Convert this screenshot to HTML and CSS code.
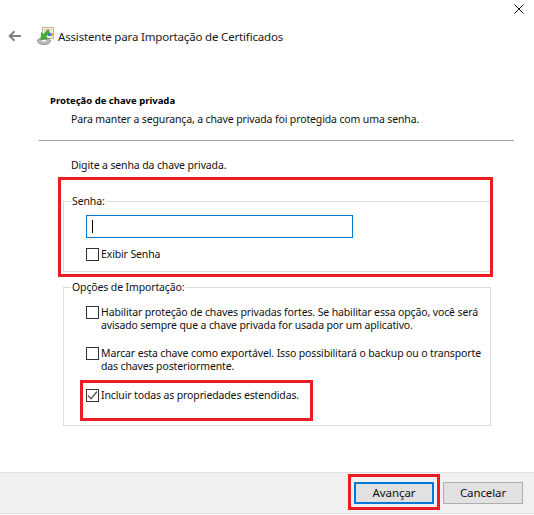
FILE: index.html
```html
<!DOCTYPE html>
<html lang="pt">
<head>
<meta charset="utf-8">
<title>Assistente para Importação de Certificados</title>
<link rel="stylesheet" href="styles.css">
</head>
<body>
<div class="window">
  <div class="closebar">
    <svg class="close" width="10" height="10" viewBox="0 0 10 10"><path d="M0.5 0.5L9.5 9.5M9.5 0.5L0.5 9.5" stroke="#111" stroke-width="1" fill="none"/></svg>
  </div>
  <div class="nav">
    <svg class="back" width="14" height="12" viewBox="0 0 14 12"><path d="M13 6H2M6.5 1.2L1.7 6L6.5 10.8" stroke="#808080" stroke-width="2" fill="none"/></svg>
    <svg class="appicon" width="17" height="18" viewBox="0 0 17 18">
      <rect x="5.5" y="0.5" width="11" height="11" fill="#f6eedb" stroke="#c9b48a"/>
      <rect x="7" y="2" width="8" height="2" fill="#e2d5b5"/>
      <rect x="11" y="6" width="3" height="3" fill="#2f7fd6"/>
      <rect x="14" y="6" width="2" height="3" fill="#f0a030"/>
      <ellipse cx="7" cy="14" rx="6.5" ry="3.5" fill="#b5bbb5" stroke="#707570" stroke-width="0.7"/>
      <ellipse cx="7" cy="13.5" rx="2.5" ry="1.2" fill="#eef0ee"/>
      <path d="M11 2.5L6.5 7.5L4.5 5.5L4 12.5L10.5 12L8.5 10L12.5 5.5Z" fill="#3fae3a" stroke="#24761f" stroke-width="0.5"/>
    </svg>
    <span class="title">Assistente para Importação de Certificados</span>
  </div>
  <main class="content">
    <div class="pagehead">
      <h1 class="heading">Proteção de chave privada</h1>
      <p class="subhead">Para manter a segurança, a chave privada foi protegida com uma senha.</p>
    </div>
    <hr class="rule">
    <p class="prompt">Digite a senha da chave privada.</p>
    <fieldset class="group group-pass">
      <legend class="legend">Senha:</legend>
      <div class="input"><span class="caret"></span></div>
      <label class="check check-show"><span class="box"></span><span>Exibir Senha</span></label>
    </fieldset>
    <fieldset class="group group-opts">
      <legend class="legend">Opções de Importação:</legend>
      <label class="check"><span class="box"></span><span>Habilitar proteção de chaves privadas fortes. Se habilitar essa opção, você será<br>avisado sempre que a chave privada for usada por um aplicativo.</span></label>
      <label class="check"><span class="box"></span><span>Marcar esta chave como exportável. Isso possibilitará o backup ou o transporte<br>das chaves posteriormente.</span></label>
      <label class="check"><span class="box"><svg width="11" height="11" viewBox="0 0 11 11"><path d="M1 5.5L4 8.7L10 1.5" stroke="#555" stroke-width="1.3" fill="none"/></svg></span><span>Incluir todas as propriedades estendidas.</span></label>
    </fieldset>
  </main>
  <footer class="footer">
    <button class="btn btn-primary">Avançar</button>
    <button class="btn">Cancelar</button>
  </footer>
  <div class="mark mark-pass"></div>
  <div class="mark mark-ext"></div>
  <div class="mark mark-next"></div>
</div>
</body>
</html>
```
FILE: styles.css
```css
* { box-sizing: border-box; }
html, body { margin: 0; padding: 0; background: #fff; }
body { font-family: "Noto Sans", "Open Sans", sans-serif; font-size: 10.5px; letter-spacing: -0.13px; color: #111; }
.window { position: relative; width: 534px; height: 515px; display: flex; flex-direction: column; overflow: hidden; }
.closebar { height: 27px; display: flex; justify-content: flex-end; padding: 4px 10px 0 0; }
.nav { height: 18px; display: flex; align-items: center; padding-left: 8px; }
.back { margin-right: 15px; }
.appicon { margin-right: 4px; }
.title { font-size: 11.5px; letter-spacing: -0.17px; color: #1a1a1a; white-space: nowrap; }
.content { flex: 1; display: flex; flex-direction: column; padding: 0 20px 0 39px; }
.pagehead { padding: 49px 0 0 11px; }
.heading { margin: 0; font-size: 9.5px; letter-spacing: 0; line-height: 14px; font-weight: 700; color: #000; }
.subhead { margin: 4px 0 0 21px; line-height: 14px; }
.rule { border: 0; border-top: 1px solid #a0a0a0; margin: 14px 0 0; width: 475px; }
.prompt { margin: 17px 0 0 32px; line-height: 14px; }
.group { margin: 0 0 0 24px; width: 428px; border: 1px solid #dcdcdc; padding: 0; min-width: 0; }
.group-pass { margin-top: 22px; height: 78px; padding: 7px 0 0 22px; }
.group-opts { margin-top: 8px; height: 146px; padding: 12px 0 0 22px; }
.legend { margin-left: -15px; padding: 0 1px; line-height: 14px; }
.input { width: 267px; height: 23px; border: 1px solid #0078d7; padding: 4px 5px; background: #fff; }
.caret { display: block; width: 1px; height: 13px; background: #000; }
.check { display: flex; gap: 2px; line-height: 13px; margin-bottom: 15.4px; align-items: flex-start; white-space: nowrap; }
.check-show { margin-top: 10px; }
.box { flex: none; width: 13px; height: 13px; border: 1px solid #333; background: #fff; display: flex; align-items: center; justify-content: center; }
.footer { height: 42px; margin-bottom: 1px; background: #f0f0f0; border-top: 1px solid #dfdfdf; border-bottom: 1px solid #dfdfdf; display: flex; justify-content: flex-end; align-items: flex-start; gap: 9px; padding: 9px 11px 0 0; }
.btn { width: 80px; height: 22px; padding: 0; font: inherit; font-size: 11.5px; letter-spacing: -0.1px; line-height: 18px; color: #111; background: #e1e1e1; border: 1px solid #adadad; }
.btn-primary { border: 2px solid #0078d7; }
.mark { position: absolute; border: 3px solid #ed1c24; pointer-events: none; }
.mark-pass { left: 58px; top: 177px; width: 435px; height: 100px; }
.mark-ext { left: 80px; top: 380px; width: 233px; height: 41px; }
.mark-next { left: 348px; top: 474px; width: 92px; height: 36px; }
```
